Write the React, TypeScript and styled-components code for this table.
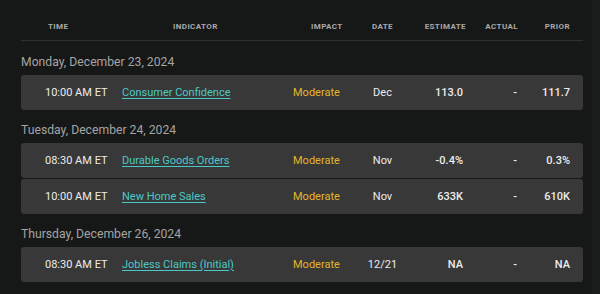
import React from 'react'
import styled, { createGlobalStyle } from 'styled-components'

type Release = {
  time: string
  indicator: string
  impact: string
  period: string
  estimate: string
  actual: string
  prior: string
}

type Day = {
  label: string
  releases: Release[]
}

const days: Day[] = [
  {
    label: 'Monday, December 23, 2024',
    releases: [
      { time: '10:00 AM ET', indicator: 'Consumer Confidence', impact: 'Moderate', period: 'Dec', estimate: '113.0', actual: '-', prior: '111.7' },
    ],
  },
  {
    label: 'Tuesday, December 24, 2024',
    releases: [
      { time: '08:30 AM ET', indicator: 'Durable Goods Orders', impact: 'Moderate', period: 'Nov', estimate: '-0.4%', actual: '-', prior: '0.3%' },
      { time: '10:00 AM ET', indicator: 'New Home Sales', impact: 'Moderate', period: 'Nov', estimate: '633K', actual: '-', prior: '610K' },
    ],
  },
  {
    label: 'Thursday, December 26, 2024',
    releases: [
      { time: '08:30 AM ET', indicator: 'Jobless Claims (Initial)', impact: 'Moderate', period: '12/21', estimate: 'NA', actual: '-', prior: 'NA' },
    ],
  },
]

const App: React.FC = () => {
  return (
    <>
      <GlobalStyle />
      <Page>
        <Calendar>
          <HeaderRow>
            <HeadCell $pad='0 0 0 27px'>Time</HeadCell>
            <HeadCell $pad='0 0 0 60px'>Indicator</HeadCell>
            <HeadCell $pad='0 0 0 26px'>Impact</HeadCell>
            <HeadCell $align='center'>Date</HeadCell>
            <HeadCell $align='right' $pad='0 4px 0 0'>Estimate</HeadCell>
            <HeadCell $align='right' $pad='0 7px 0 0'>Actual</HeadCell>
            <HeadCell $align='right' $pad='0 13px 0 0'>Prior</HeadCell>
          </HeaderRow>

          {days.map((day) => (
            <DayGroup key={day.label}>
              <DayTitle>{day.label}</DayTitle>
              <Rows>
                {day.releases.map((r) => (
                  <Row key={r.indicator}>
                    <Cell $pad='0 0 0 24px'>{r.time}</Cell>
                    <Cell $pad='0 0 0 9px'>
                      <IndicatorLink href='#'>{r.indicator}</IndicatorLink>
                    </Cell>
                    <Impact>{r.impact}</Impact>
                    <Cell $align='center'>{r.period}</Cell>
                    <Value $pad='0 7px 0 0'>{r.estimate}</Value>
                    <Value $pad='0 8px 0 0'>{r.actual}</Value>
                    <Value $pad='0 13px 0 0'>{r.prior}</Value>
                  </Row>
                ))}
              </Rows>
            </DayGroup>
          ))}
        </Calendar>
        <ScrollTrack />
      </Page>
    </>
  )
}

export default App

const GlobalStyle = createGlobalStyle`
  html, body {
    margin: 0;
    padding: 0;
    background: #161717;
  }
  body {
    font-family: Roboto, 'Liberation Sans', sans-serif;
    -webkit-font-smoothing: antialiased;
  }
`

const Page = styled.div`
  display: flex;
  width: 600px;
  height: 294px;
  overflow: hidden;
  background: #161717;
`

const Calendar = styled.div`
  width: 562px;
  padding-left: 21px;
`

const ScrollTrack = styled.div`
  margin-left: auto;
  width: 8px;
  background: #1b1c1c;
`

const columns = '92px 172px 65px 65px 55px 55px 58px'

const HeaderRow = styled.div`
  display: grid;
  grid-template-columns: ${columns};
  align-items: center;
  height: 28px;
  margin-top: 12px;
  border-bottom: 1px solid #2f3030;
`

const HeadCell = styled.div<{ $align?: string; $pad?: string }>`
  text-align: ${(p) => p.$align || 'left'};
  padding: ${(p) => p.$pad || '0'};
  font-size: 8px;
  font-weight: 700;
  letter-spacing: 0.4px;
  text-transform: uppercase;
  color: #a9a9a9;
`

const DayGroup = styled.section`
  margin-top: 12px;

  &:first-of-type {
    margin-top: 13px;
  }
`

const DayTitle = styled.h3`
  margin: 0 0 5px;
  font-size: 12.2px;
  line-height: 16px;
  font-weight: 400;
  color: #a4a4a4;
`

const Rows = styled.div`
  display: flex;
  flex-direction: column;
  gap: 1px;
`

const Row = styled.div`
  display: grid;
  grid-template-columns: ${columns};
  align-items: center;
  height: 35px;
  border-radius: 3px;
  background: #383838;
  font-size: 11px;
  color: #ececec;
`

const Cell = styled.div<{ $align?: string; $pad?: string }>`
  text-align: ${(p) => p.$align || 'left'};
  padding: ${(p) => p.$pad || '0'};
  white-space: nowrap;
`

const Value = styled(Cell)`
  text-align: right;
  font-weight: 500;
`

const Impact = styled(Cell)`
  padding-left: 8px;
  color: #e4b629;
`

const IndicatorLink = styled.a`
  color: #4cc9c6;
  text-decoration: underline;
  text-underline-offset: 2px;
`
